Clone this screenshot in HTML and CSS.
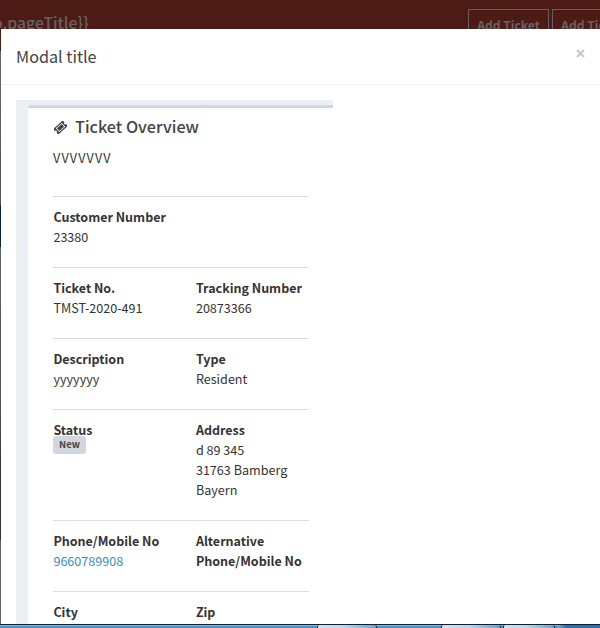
FILE: index.html
```
<!DOCTYPE html>
<html lang="en">
<head>
<meta charset="utf-8">
<title>Ticket</title>
<link rel="stylesheet" href="styles.css">
</head>
<body>
<div class="page">
  <header class="topbar">
    <div class="page-title">o.pageTitle}}</div>
    <div class="actions"><span class="btn">Add Ticket</span><span class="btn">Add Ticket</span></div>
  </header>
  <div class="modal">
    <div class="modal-header"><h4>Modal title</h4>
      <svg class="close" viewBox="0 0 9 9"><path d="M1 1l7 7M8 1L1 8"/></svg>
    </div>
    <div class="modal-body">
      <div class="content">
        <section class="box">
          <h3><svg class="ticket" viewBox="0 0 14 14"><g transform="rotate(-42 7 7)"><path fill="currentColor" fill-rule="evenodd" d="M0 3H14V5.6A1.4 1.4 0 0 0 14 8.4V11H0V8.4A1.4 1.4 0 0 0 0 5.6ZM2.6 4.3V9.7H11.4V4.3Z"/><path fill="currentColor" d="M3.5 5.1h7v3.8h-7z"/></g></svg><span>Ticket Overview</span></h3>
          <p class="subject">VVVVVVV</p>
          <div class="row"><div><b>Customer Number</b><span>23380</span></div></div>
          <div class="row"><div><b>Ticket No.</b><span>TMST-2020-491</span></div><div><b>Tracking Number</b><span>20873366</span></div></div>
          <div class="row"><div><b>Description</b><span>yyyyyyy</span></div><div><b>Type</b><span>Resident</span></div></div>
          <div class="row"><div><b>Status</b><em class="badge">New</em></div><div><b>Address</b><span>d 89 345</span><span>31763 Bamberg</span><span>Bayern</span></div></div>
          <div class="row"><div><b>Phone/Mobile No</b><a>9660789908</a></div><div><b>Alternative</b><b>Phone/Mobile No</b></div></div>
          <div class="row"><div><b>City</b></div><div><b>Zip</b></div></div>
        </section>
      </div>
    </div>
  </div>
  <footer class="taskbar"><i class="task first"></i><i class="task second"></i><i class="task third"></i><i class="edge"></i></footer>
</div>
</body>
</html>
```
FILE: styles.css
```
* { box-sizing: border-box; }
body { margin: 0; font: 12.6px/20px "Noto Sans CJK SC", "Open Sans", sans-serif; color: #333; }
.page { width: 600px; height: 628px; overflow: hidden; display: flex; flex-direction: column; background: linear-gradient(#4d1b16 51px, #666 51px, #555 205px, #0a2440 205px, #0a2440 247px, #606060 247px, #555 400px, #333 470px, #333 540px, #606060 540px); }
.topbar { height: 29px; flex: none; display: flex; justify-content: space-between; overflow: hidden; color: #69615f; background: #4d1b16; }
.page-title { margin: 12px 0 0 -7px; font-size: 15.8px; line-height: 22px; font-weight: 500; white-space: nowrap; }
.actions { display: flex; gap: 3px; padding-top: 9px; margin-right: -33px; }
.btn { flex: none; width: 81px; height: 34px; border: 1px solid #69615f; text-align: center; font-size: 12.1px; line-height: 30px; font-weight: 700; white-space: nowrap; }
.modal { margin-left: 1px; height: 595px; flex: none; overflow: hidden; background: #fff; }
.modal-header { height: 56px; padding: 14px 15px 15px; display: flex; justify-content: space-between; border-bottom: 1px solid #f2f2f2; }
h4 { margin: 0; font-size: 16.2px; line-height: 26px; font-weight: 400; color: #444; }
.close { width: 9px; height: 9px; margin-top: 6px; stroke: #c7c7c7; stroke-width: 2; }
.modal-body { padding: 15px; }
.content { width: 317px; padding: 5px 0 0 12px; background: #ecf0f5; }
.box { height: 540px; padding: 6px 24px 0 25px; border-top: 3px solid #d2d6de; border-top-left-radius: 3px; background: #fff; }
h3 { margin: 0; height: 24px; display: flex; align-items: center; gap: 8px; font-size: 16.2px; line-height: 24px; font-weight: 500; color: #444; }
.ticket { width: 13px; height: 13px; margin: 3px 0 0 1px; }
.subject { margin: 10px 0 28px; letter-spacing: 1px; }
.row { display: grid; grid-template-columns: 142.5px 1fr; padding: 10px 0 20px; border-top: 1px solid #ddd; }
.row b, .row span, .row a { display: block; padding-left: .4px; white-space: nowrap; }
.row b { font-size: 12.5px; }
.row a { color: #3c8dbc; }
.badge { display: block; width: 33px; height: 18px; margin-top: -4px; border-radius: 3px; background: #d2d6de; color: #444; font: 700 9.5px/17px "Noto Sans CJK SC", sans-serif; text-align: center; }
.taskbar { height: 4px; flex: none; display: flex; border-top: 1px solid #10202e; background: linear-gradient(#8fc5ea, #4395d1 55%, #3c89c8); }
.task { height: 3px; border: solid #17324a; border-width: 0 1px; border-radius: 2px 2px 0 0; background: linear-gradient(90deg, #d0e3f4, #bdd7ef 45%, #6ba3d4); }
.first { width: 60px; margin-left: 317px; }
.second { width: 60px; margin-left: 64px; }
.third { width: 52px; margin-left: 2px; }
.edge { flex: 1; margin-left: 3px; background: linear-gradient(90deg, #72a7d5, #2872b6 20%); }
```
